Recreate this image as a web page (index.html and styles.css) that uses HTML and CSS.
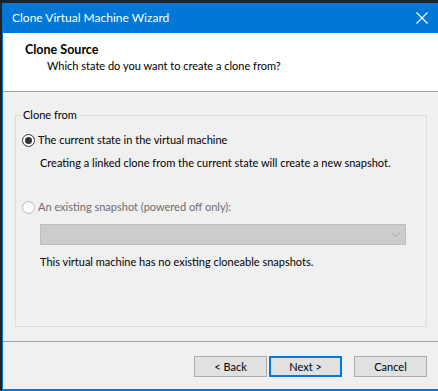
FILE: index.html
```html
<!DOCTYPE html>
<html lang="en">
<head>
    <meta charset="UTF-8">
    <title>Clone Virtual Machine Wizard</title>
    <link rel="stylesheet" href="styles.css">
</head>
<body>
    <div class="window">
        <div class="titlebar">
            <span class="title">Clone Virtual Machine Wizard</span>
            <svg class="close" width="12" height="12" viewBox="0 0 12 12">
                <path d="M0.5 0.5 L11.5 11.5 M11.5 0.5 L0.5 11.5" stroke="#fff" stroke-width="1.1" fill="none"/>
            </svg>
        </div>

        <div class="header">
            <div class="header-title">Clone Source</div>
            <div class="header-sub">Which state do you want to create a clone from?</div>
        </div>

        <div class="content">
            <fieldset class="group">
                <legend>Clone from</legend>

                <div class="radio-row">
                    <span class="radio checked"></span>
                    <span>The current state in the virtual machine</span>
                </div>
                <div class="note first-note">Creating a linked clone from the current state will create a new snapshot.</div>

                <div class="radio-row disabled second">
                    <span class="radio"></span>
                    <span>An existing snapshot (powered off only):</span>
                </div>
                <div class="select">
                    <svg width="9" height="5" viewBox="0 0 9 5">
                        <path d="M0.5 0.5 L4.5 4.5 L8.5 0.5" stroke="#a6a6a6" stroke-width="1" fill="none"/>
                    </svg>
                </div>
                <div class="note last-note">This virtual machine has no existing cloneable snapshots.</div>
            </fieldset>
        </div>

        <div class="footer">
            <button class="button">&lt; Back</button>
            <button class="button default">Next &gt;</button>
            <button class="button cancel">Cancel</button>
        </div>
    </div>
</body>
</html>
```

FILE: styles.css
```css
body {
    margin: 0;
    background: #222;
    font-family: Lato, "Noto Sans", sans-serif;
    font-size: 11px;
    color: #000;
    overflow: hidden;
}

.window {
    margin: 3px 0 0 2px;
    height: 386px;
    border-left: 1px solid #0078d7;
    border-bottom: 2px solid #0078d7;
    background: #f0f0f0;
    white-space: nowrap;
}

.titlebar {
    height: 30px;
    background: #0078d7;
    color: #fff;
    display: flex;
    align-items: center;
    padding-left: 9px;
}

.title {
    flex: 1;
    font-size: 12px;
    line-height: 30px;
}

.close {
    margin-right: 10px;
}

.header {
    height: 59px;
    background: #fff;
    border-bottom: 1px solid #a0a0a0;
    padding-top: 9px;
    box-sizing: border-box;
    line-height: 16px;
}

.header-title {
    font-weight: bold;
    font-size: 12.5px;
    padding-left: 22px;
}

.header-sub {
    padding-left: 44px;
}

.content {
    height: 250px;
    box-sizing: border-box;
    padding: 15px 11px 0 12px;
    border-bottom: 1px solid #a0a0a0;
}

.group {
    margin: 0;
    height: 220px;
    box-sizing: border-box;
    padding: 0;
    border: 1px solid #dcdcdc;
    line-height: 16px;
}

.group legend {
    margin-left: 5px;
    padding: 0 2px;
    line-height: 16px;
}

.radio-row {
    display: flex;
    align-items: center;
    margin-top: 9px;
    padding-left: 6px;
    height: 16px;
}

.radio-row.second {
    margin-top: 28px;
}

.radio {
    width: 11px;
    height: 11px;
    border: 1px solid #333;
    border-radius: 50%;
    background: #fff;
    margin-right: 3px;
    position: relative;
}

.radio.checked::after {
    content: "";
    position: absolute;
    left: 2px;
    top: 2px;
    width: 7px;
    height: 7px;
    border-radius: 50%;
    background: #333;
}

.disabled {
    color: #6d6d6d;
}

.disabled .radio {
    border-color: #bcbcbc;
    background: #fbfbfb;
}

.note {
    padding-left: 24px;
}

.first-note {
    margin-top: 7px;
}

.last-note {
    margin-top: 9px;
}

.select {
    margin: 9px 20px 0 24px;
    height: 21px;
    box-sizing: border-box;
    border: 1px solid #bfbfbf;
    background: #cccccc;
    display: flex;
    align-items: center;
    justify-content: flex-end;
    padding-right: 5px;
}

.footer {
    display: flex;
    justify-content: flex-end;
    padding: 14px 11px 0 0;
}

.button {
    width: 73px;
    height: 21px;
    box-sizing: border-box;
    border: 1px solid #adadad;
    background: #e1e1e1;
    font-family: Lato, "Noto Sans", sans-serif;
    font-size: 11px;
    color: #000;
    padding: 0;
    margin-left: 2px;
}

.button.default {
    border: 2px solid #0078d7;
}

.button.cancel {
    margin-left: 12px;
}
```
